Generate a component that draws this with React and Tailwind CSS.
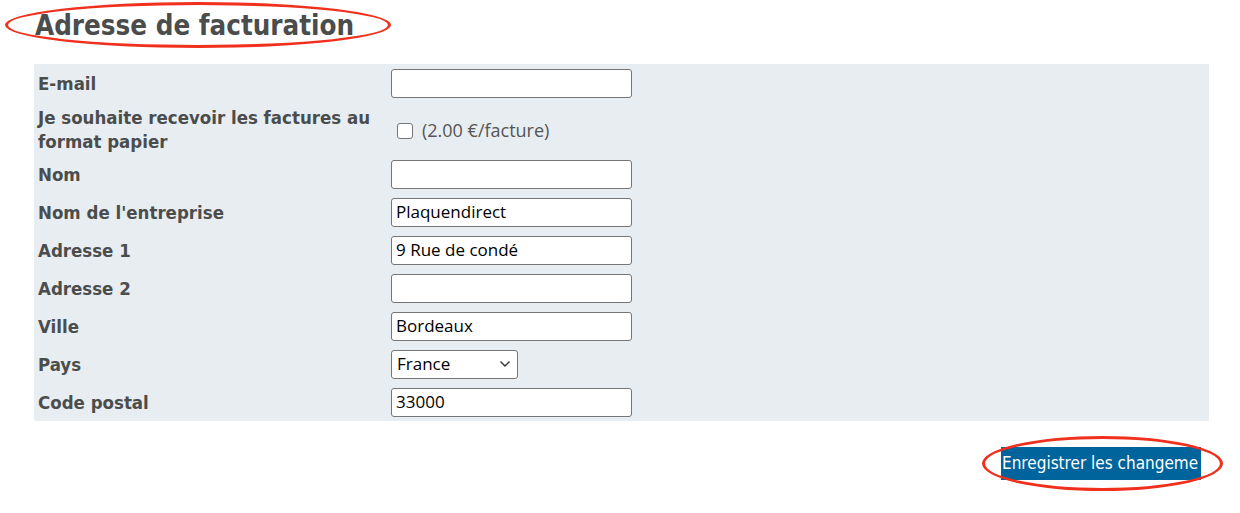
import React from 'react';

const rows = [
  { label: 'E-mail', value: '' },
  { label: 'Je souhaite recevoir les factures au format papier', type: 'checkbox' },
  { label: 'Nom', value: '' },
  { label: "Nom de l'entreprise", value: 'Plaquendirect' },
  { label: 'Adresse 1', value: '9 Rue de condé' },
  { label: 'Adresse 2', value: '' },
  { label: 'Ville', value: 'Bordeaux' },
  { label: 'Pays', type: 'select', value: 'France' },
  { label: 'Code postal', value: '33000' },
];

const labelFont = { fontFamily: '"DejaVu Sans Condensed", "DejaVu Sans", sans-serif' };
const fieldFont = { fontFamily: '"Open Sans", "Liberation Sans", sans-serif' };

const Field = ({ row }) => {
  if (row.type === 'checkbox') {
    return (
      <label className="flex items-center gap-[9px] pl-[6px] pt-[4px] text-[18px] text-[#555]" style={fieldFont}>
        <span className="w-[16px] h-[16px] rounded-[3px] border border-[#767676] bg-white" />
        (2.00 €/facture)
      </label>
    );
  }
  if (row.type === 'select') {
    return (
      <div className="flex items-center justify-between w-[127px] h-[29px] border border-[#767676] rounded-[3px] bg-white pl-[5px] pr-[6px] text-[17px] text-black" style={fieldFont}>
        <span>{row.value}</span>
        <svg width="12" height="8" viewBox="0 0 12 8" fill="none" stroke="#333" strokeWidth="1.4">
          <path d="M1.5 1.5 L6 6 L10.5 1.5" />
        </svg>
      </div>
    );
  }
  return (
    <div className="flex items-center w-[241px] h-[29px] border border-[#767676] rounded-[3px] bg-white px-[4px] text-[17px] text-black" style={fieldFont}>
      {row.value}
    </div>
  );
};

export default function App() {
  return (
    <div className="relative w-[1240px] h-[513px] bg-white overflow-hidden">
      <h1 className="pl-[35px] pt-[7px] h-[64px] text-[27.5px] font-bold text-[#4b4d4d] leading-[36px]" style={labelFont}>
        Adresse de facturation
      </h1>

      <div className="ml-[34px] w-[1175px] bg-[#e8edf1]">
        {rows.map((row) => (
          <div key={row.label} className={`flex items-center ${row.type === 'checkbox' ? 'h-[53px]' : 'h-[38px]'}`}>
            <div className={`w-[357px] pl-[4px] pr-[6px] text-[18.5px] font-bold leading-[24px] text-[#4b4d4d] ${row.type === 'checkbox' ? 'pt-[2px]' : 'pt-[1px]'}`} style={labelFont}>
              {row.label}
            </div>
            <Field row={row} />
          </div>
        ))}
      </div>

      <div className="flex justify-end pr-[39px] pt-[26px]">
        <button className="w-[200px] h-[33px] bg-[#00649c] text-white text-[17px] text-left pl-[1px] whitespace-nowrap" style={labelFont}>
          Enregistrer les changeme
        </button>
      </div>

      {/* annotation ellipses */}
      <div className="absolute left-[5px] top-[2px] w-[386px] h-[46px] rounded-[50%] border-[3px] border-[#f0301c]" />
      <div className="absolute left-[982px] top-[436px] w-[241px] h-[55px] rounded-[50%] border-[3px] border-[#f0301c]" />
    </div>
  );
}
